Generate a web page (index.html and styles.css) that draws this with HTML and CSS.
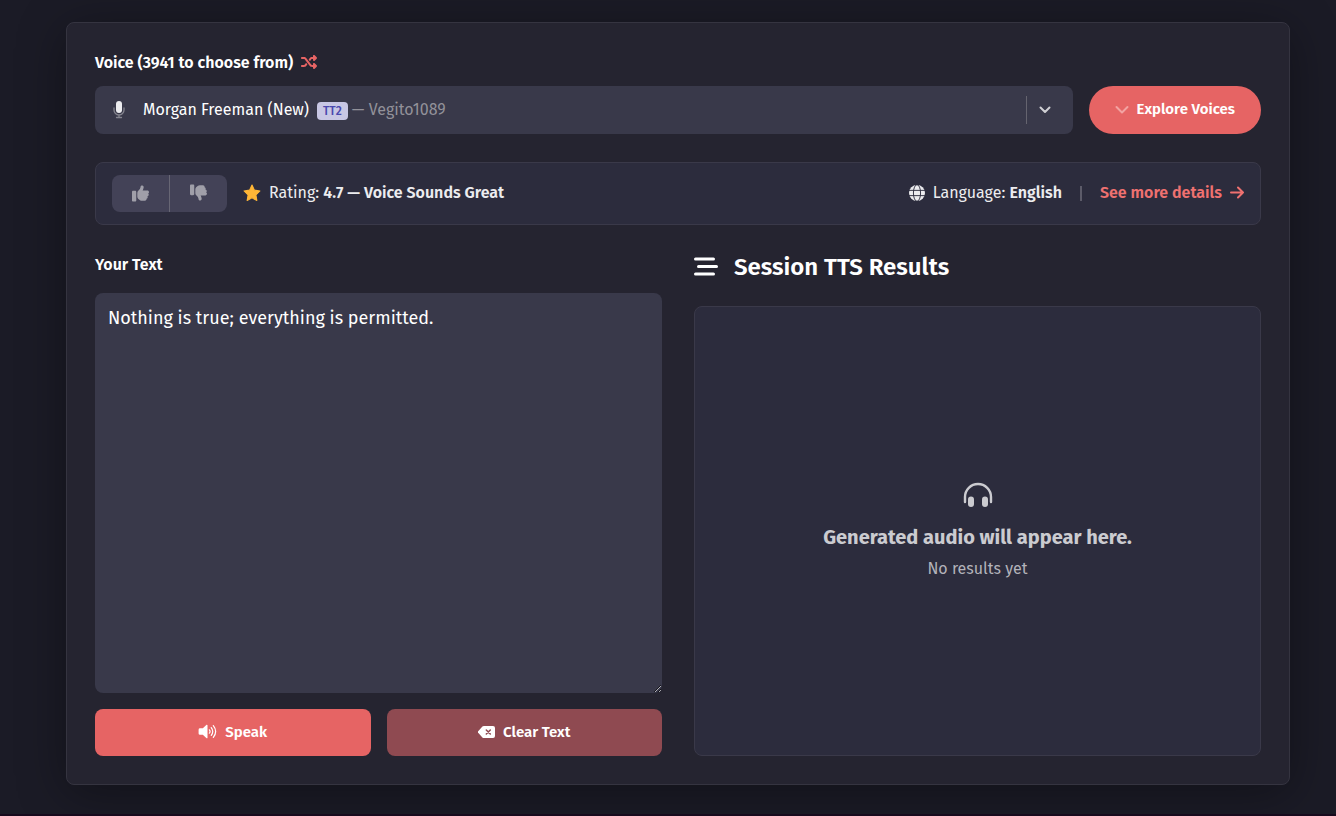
FILE: index.html
```html
<!DOCTYPE html>
<html lang="en">
<head>
    <meta charset="UTF-8">
    <meta name="viewport" content="width=device-width, initial-scale=1.0">
    <title>Text to Speech</title>
    <link rel="stylesheet" href="styles.css">
</head>
<body>

<main class="page">
    <form class="card" onsubmit="return false;">

        <!-- Voice picker -->
        <div class="voice-label">
            <label for="voice">Voice (3941 to choose from)</label>
            <button type="button" class="shuffle" aria-label="Random voice">
                <svg width="16" height="16" viewBox="0 0 512 512" fill="currentColor"><path d="M403.8 34.4c12-5 25.7-2.200 34.900 6.900l64 64c6 6 9.400 14.100 9.400 22.600s-3.400 16.600-9.400 22.600l-64 64c-9.200 9.200-22.900 11.900-34.900 6.900s-19.800-16.600-19.800-29.600V160H352c-10 0-20 5-26 13L284 229 244 176l31-42C293 110 322 96 352 96h32V64c0-12.900 7.800-24.600 19.800-29.600zM164 283L204 336l-31 42C155 402 126 416 96 416H32c-18 0-32-14-32-32s14-32 32-32H96c10 0 20-5 26-13L164 283zm274.600 188c-9.200 9.200-22.900 11.900-34.900 6.900s-19.800-16.600-19.800-29.600V416H352c-30 0-59-14-77-38L122 173c-6-8-16-13-26-13H32c-18 0-32-14-32-32s14-32 32-32H96c30 0 59 14 77 38L326 339c6 8 16 13 26 13h32V320c0-12.900 7.800-24.600 19.800-29.600s25.700-2.200 34.900 6.900l64 64c6 6 9.400 14.100 9.400 22.600s-3.400 16.600-9.400 22.600l-64 64z"/></svg>
            </button>
        </div>
        <div class="voice-row">
            <div class="voice-box">
                <svg class="mic" width="12" height="18" viewBox="0 0 12 18" fill="none" stroke-linecap="round"><path d="M1 7v2a5 5 0 0 0 10 0V7M6 14v2.500M3.500 16.500h5" stroke="#85858f" stroke-width="1.300"/><rect x="3" y="0" width="6" height="12" rx="3" fill="#ececef"/></svg>
                <select id="voice">
                    <option>Morgan Freeman (New)</option>
                </select>
                <span class="badge">TT2</span>
                <span class="author">— Vegito1089</span>
                <span class="caret">
                    <svg width="12" height="8" viewBox="0 0 12 8" fill="none" stroke="currentColor" stroke-width="2" stroke-linecap="round" stroke-linejoin="round"><path d="M1.500 1.500L6 6l4.500-4.500"/></svg>
                </span>
            </div>
            <button type="button" class="btn explore">
                <svg width="14" height="9" viewBox="0 0 14 9" fill="none" stroke="#f3a3a2" stroke-width="2" stroke-linecap="round" stroke-linejoin="round"><path d="M1.500 2l5.500 5.500L12.500 2"/></svg>
                Explore Voices
            </button>
        </div>

        <!-- Rating and language -->
        <div class="details">
            <div class="votes">
                <button type="button" aria-label="Thumbs up">
                    <svg width="17" height="17" viewBox="0 0 512 512" fill="currentColor"><path d="M313 17c26 5 43 31 38 57l-3 20c-5 27-15 52-28 75H464c26 0 48 21 48 47 0 18-10 34-26 42 11 9 18 22 18 38 0 23-17 43-39 47 4 7 7 16 7 25 0 21-14 39-33 45 1 4 1 7 1 11 0 26-21 48-48 48H295c-19 0-38-6-54-16l-38-26c-27-18-43-48-43-80V239c0-29 13-57 36-75l7-6c27-21 45-51 51-84l3-19c5-26 30-43 56-38zM32 176H96c18 0 32 14 32 32V464c0 18-14 32-32 32H32c-18 0-32-14-32-32V208c0-18 14-32 32-32z"/></svg>
                </button>
                <button type="button" class="down" aria-label="Thumbs down">
                    <svg width="17" height="17" viewBox="0 0 512 512" fill="currentColor"><g transform="matrix(1 0 0 -1 0 512)"><path d="M313 17c26 5 43 31 38 57l-3 20c-5 27-15 52-28 75H464c26 0 48 21 48 47 0 18-10 34-26 42 11 9 18 22 18 38 0 23-17 43-39 47 4 7 7 16 7 25 0 21-14 39-33 45 1 4 1 7 1 11 0 26-21 48-48 48H295c-19 0-38-6-54-16l-38-26c-27-18-43-48-43-80V239c0-29 13-57 36-75l7-6c27-21 45-51 51-84l3-19c5-26 30-43 56-38zM32 176H96c18 0 32 14 32 32V464c0 18-14 32-32 32H32c-18 0-32-14-32-32V208c0-18 14-32 32-32z"/></g></svg>
                </button>
            </div>
            <div class="rating">
                <svg width="18" height="18" viewBox="0 0 17 17" fill="#ffb636" stroke="#ffb636" stroke-linejoin="round"><path d="M8.500 1l2.300 4.800 5.200.8-3.800 3.700.9 5.300-4.600-2.500-4.600 2.500.9-5.300L1 6.600l5.200-.8z"/></svg>
                <span>Rating: <strong>4.7 — Voice Sounds Great</strong></span>
            </div>
            <div class="language">
                <svg width="16" height="16" viewBox="0 0 17 17"><circle cx="8.500" cy="8.500" r="8.500" fill="#ececef"/><g fill="none" stroke="#2c2c3d"><ellipse cx="8.500" cy="8.500" rx="3.800" ry="8.800"/><path d="M0 5.700h17M0 11.300h17"/></g></svg>
                <span>Language: <strong>English</strong></span>
            </div>
            <span class="divider"></span>
            <a class="more" href="#">
                See more details
                <svg width="14" height="13" viewBox="0 0 14 13" fill="none" stroke="currentColor" stroke-width="2" stroke-linecap="round" stroke-linejoin="round"><path d="M1 6.500h12M8 1.500l5 5-5 5"/></svg>
            </a>
        </div>

        <!-- Text input and results -->
        <div class="columns">
            <section class="column">
                <label class="text-label" for="text">Your Text</label>
                <textarea id="text" spellcheck="false">Nothing is true; everything is permitted.</textarea>
                <div class="actions">
                    <button type="submit" class="btn">
                        <svg width="19" height="15" viewBox="0 0 20 16" fill="none" stroke="currentColor" stroke-width="1.300" stroke-linecap="round"><path d="M10 1.300v13.400c0 .6-.6.8-1 .4L5 11.500H2A1.500 1.500 0 0 1 .5 10V6A1.500 1.500 0 0 1 2 4.500h3L9 .9c.4-.4 1-.2 1 .4z" fill="currentColor" stroke="none"/><path d="M12 6.200q1.500 1.800 0 3.600M14 3.900q3.200 4.100 0 8.200M16.200 1.800q5 6.200 0 12.400"/></svg>
                        Speak
                    </button>
                    <button type="reset" class="btn clear">
                        <svg width="17" height="12" viewBox="0 0 17 12"><path d="M5.800 0H15a2 2 0 0 1 2 2v8a2 2 0 0 1-2 2H5.800a2 2 0 0 1-1.400-.6L.4 7.100a1.500 1.500 0 0 1 0-2.200l4-4.300A2 2 0 0 1 5.800 0z" fill="currentColor"/><path d="M8.300 4l4 4M12.300 4l-4 4" stroke="#8f4a51" stroke-width="1.500" stroke-linecap="round"/></svg>
                        Clear Text
                    </button>
                </div>
            </section>

            <section class="column">
                <h2>
                    <svg width="24" height="20" viewBox="0 0 24 20" fill="none" stroke="currentColor" stroke-width="3" stroke-linecap="round"><path d="M1.500 2h18M4.500 9.500h18M1.500 17h18"/></svg>
                    Session TTS Results
                </h2>
                <div class="results">
                    <svg width="30" height="26" viewBox="0 0 30 26" fill="none" stroke="currentColor" stroke-width="2.400" stroke-linecap="round"><path d="M2 20v-5a13 13 0 0 1 26 0v5"/><rect x="5" y="14.500" width="6" height="10.500" rx="3" fill="currentColor" stroke="none"/><rect x="19" y="14.500" width="6" height="10.500" rx="3" fill="currentColor" stroke="none"/></svg>
                    <p class="results-title">Generated audio will appear here.</p>
                    <p class="results-note">No results yet</p>
                </div>
            </section>
        </div>
    </form>
</main>

</body>
</html>
```
FILE: styles.css
```css
* {
    box-sizing: border-box;
}

body {
    margin: 0;
    min-height: 100vh;
    background-color: #1b1b26;
    border-bottom: 2px solid #170a1d;
    color: #fff;
    font-family: "Fira Sans", "Noto Sans", sans-serif;
    font-size: 16px;
    line-height: 24px;
}

button,
select,
textarea {
    font-family: inherit;
    color: inherit;
}

button {
    border: none;
    cursor: pointer;
}

svg {
    flex: none;
}

.page {
    padding: 22px 46px 29px 66px;
}

.card {
    background-color: #252430;
    border: 1px solid #353440;
    border-radius: 8px;
    padding: 28px;
    box-shadow: 0 8px 48px rgba(0, 0, 0, 0.35);
}

.voice-label {
    display: flex;
    align-items: center;
    gap: 8px;
    margin-bottom: 11px;
    font-weight: 600;
}

.shuffle {
    display: flex;
    padding: 0 0 2px;
    background: none;
    color: #e66464;
}

.voice-row {
    display: flex;
    gap: 16px;
}

.voice-box {
    flex: 1;
    display: flex;
    align-items: center;
    height: 48px;
    padding: 0 22px 0 18px;
    background-color: #39394a;
    border-radius: 8px;
}

.voice-box select {
    appearance: none;
    margin: 0 7px 0 18px;
    padding: 0 0 2px;
    border: none;
    background: none;
    font-size: 16px;
}

.badge {
    margin: 2px 4px 0 0;
    padding: 0 6px;
    border-radius: 4px;
    background-color: #c8c7e4;
    color: #4a48ae;
    font-size: 12px;
    font-weight: 500;
    line-height: 18px;
}

.author {
    color: #929199;
}

.caret {
    display: flex;
    align-items: center;
    height: 28px;
    margin-left: auto;
    padding-left: 12px;
    border-left: 1px solid #65646f;
    color: #d0d0d4;
}

.btn {
    display: flex;
    flex: 1;
    align-items: center;
    justify-content: center;
    gap: 8px;
    height: 47px;
    padding: 0 26px 2px;
    border-radius: 8px;
    background-color: #e66464;
    font-size: 15px;
    font-weight: 600;
}

.explore {
    flex: none;
    height: 48px;
    border-radius: 24px;
}

.clear {
    background-color: #8f4a51;
}

.details {
    display: flex;
    flex-wrap: wrap;
    align-items: center;
    margin: 28px 0 27px;
    padding: 12px 16px;
    background-color: #2c2c3d;
    border: 1px solid #3a3949;
    border-radius: 8px;
    color: #ececef;
}

.details strong,
.more {
    font-weight: 600;
}

.votes {
    display: flex;
    margin-right: 16px;
    border-radius: 8px;
    overflow: hidden;
}

.votes button {
    display: flex;
    align-items: center;
    justify-content: center;
    width: 57px;
    height: 37px;
    padding-bottom: 2px;
    background-color: #434257;
    color: #a09fa9;
}

.votes .down {
    width: 58px;
    padding-bottom: 4px;
    border-left: 1px solid #676674;
}

.rating,
.language,
.more {
    display: flex;
    align-items: center;
    gap: 8px;
    padding-bottom: 2px;
}

.language {
    margin-left: auto;
}

.divider {
    width: 2px;
    height: 15px;
    margin: 0 18px;
    background-color: #5c5b69;
}

.more {
    color: #ef7170;
    text-decoration: none;
}

.columns {
    display: grid;
    grid-template-columns: 1fr 1fr;
    gap: 32px;
}

.column {
    display: flex;
    flex-direction: column;
}

.text-label {
    padding-top: 1px;
    margin-bottom: 16px;
    font-weight: 600;
}

textarea {
    height: 400px;
    padding: 13px;
    border: none;
    border-radius: 8px;
    outline: none;
    background-color: #39394a;
    font-size: 18px;
    line-height: 24px;
    resize: vertical;
}

.actions {
    display: flex;
    gap: 16px;
    margin-top: 16px;
}

h2 {
    display: flex;
    align-items: center;
    gap: 16px;
    margin: 0 0 24px;
    font-size: 24px;
    font-weight: 600;
    line-height: 30px;
}

.results {
    flex: 1;
    display: flex;
    flex-direction: column;
    align-items: center;
    justify-content: center;
    background-color: #2c2c3d;
    border: 1px solid #3a3949;
    border-radius: 8px;
    color: #cbcbd0;
}

.results p {
    margin: 0;
}

.results .results-title {
    margin: 13px 0 4px;
    font-size: 20px;
    font-weight: 700;
    line-height: 32px;
}

.results .results-note {
    color: #b3b3ba;
}
```
